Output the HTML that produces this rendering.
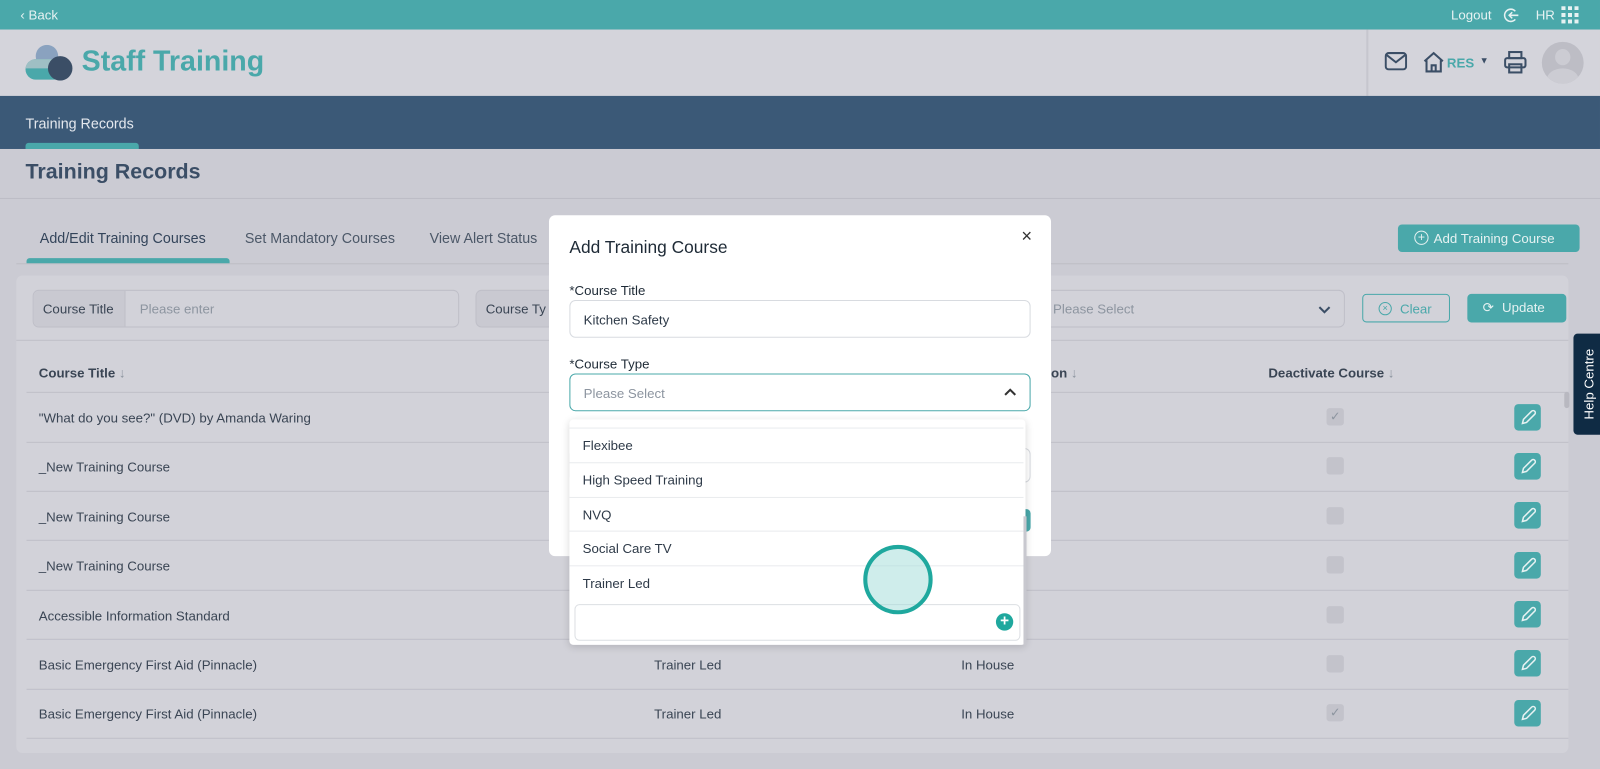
<!DOCTYPE html>
<html><head><meta charset="utf-8"><style>
*{box-sizing:border-box;margin:0;padding:0}
body{width:1600px;height:769px;overflow:hidden;font-family:"Liberation Sans",sans-serif;background:#cbcbd3;position:relative;color:#3a4554}
#w{position:absolute;left:0;top:0;width:1568px;height:754px;transform:scale(1.0204);transform-origin:0 0}
.abs{position:absolute}
.top{left:0;top:0;width:1568px;height:29px;background:#4aa8aa;color:#e6f2f2;font-size:13px}
.hdr{left:0;top:29px;width:1568px;height:65px;background:#d4d4db}
.nav{left:0;top:94px;width:1568px;height:52px;background:#3b5977}
.t{font-size:13px;white-space:nowrap}
.card{left:16px;top:270px;width:1521px;height:468px;background:#d2d2d9;border-radius:6px}
.row{left:26px;width:1511px;height:1px;background:#bfbfc8}
.chk{width:17px;height:17px;border-radius:3px;background:#c3c3cb}
.edit{width:26px;height:26px;border-radius:4px;background:#4aa8aa}
.modal{left:538px;top:211px;width:492px;height:334px;background:#fff;border-radius:6px}
.inp{border:1px solid #d8dbe0;border-radius:6px;background:#fff}
.dd{left:558px;top:411px;width:447px;height:221px;background:#fff;box-shadow:0 2px 8px rgba(0,0,0,.15);border-radius:4px}
.opt{position:absolute;left:0;width:445px;height:34px;border-top:1px solid #e9ebee;font-size:13px;padding:9px 13px;color:#2e3a48}
</style></head><body><div id="w">
<div class="abs top">
 <div class="abs t" style="left:20px;top:7px">‹ Back</div>
 <div class="abs t" style="left:1422px;top:7px">Logout</div>
 <svg class="abs" style="left:1473px;top:7px" width="16" height="16" viewBox="0 0 16 16" fill="none" stroke="#e6f2f2" stroke-width="1.5"><path d="M12 4A6 6 0 1 0 12 12"/><path d="M6 8h9M9 5L6 8l3 3"/></svg>
 <div class="abs t" style="left:1505px;top:7px">HR</div>
 <div class="abs" style="left:1530px;top:6px;width:17px;height:17px;background:repeating-linear-gradient(90deg,#e6f2f2 0 4px,transparent 4px 6.5px);-webkit-mask:repeating-linear-gradient(0deg,#000 0 4px,transparent 4px 6.5px)"></div>
</div>
<div class="abs hdr">
 <svg class="abs" style="left:24px;top:15px" width="48" height="35" viewBox="0 0 48 35"><ellipse cx="22" cy="11" rx="11" ry="11" fill="#8aa2bf"/><rect x="1" y="14" width="38" height="20" rx="10" fill="#4aa8aa"/><path d="M1 23a10 10 0 0 1 10-9h20v9z" fill="#9fbfc4"/><circle cx="35" cy="23" r="12" fill="#3b4e66"/></svg>
 <div class="abs" style="left:80px;top:15px;font-size:28px;font-weight:bold;color:#4aa8aa">Staff Training</div>
 <div class="abs" style="left:1339px;top:0;width:2px;height:65px;background:#c6c6ce"></div>
 <svg class="abs" style="left:1357px;top:22px" width="22" height="18" viewBox="0 0 22 18" fill="none" stroke="#3b4e66" stroke-width="2"><rect x="1" y="1" width="20" height="16" rx="3"/><path d="M2 3l9 7 9-7"/></svg>
 <svg class="abs" style="left:1394px;top:21px" width="22" height="22" viewBox="0 0 22 22" fill="none" stroke="#3b4e66" stroke-width="2"><path d="M2 10L11 2l9 8M4 9v11h14V9M9 20v-6h4v6"/></svg>
 <div class="abs" style="left:1418px;top:25px;font-size:13px;font-weight:bold;color:#4aa8aa">RES</div>
 <div class="abs" style="left:1450px;top:25px;font-size:9px;color:#3b4e66">▼</div>
 <svg class="abs" style="left:1474px;top:21px" width="22" height="22" viewBox="0 0 22 22" fill="none" stroke="#3b4e66" stroke-width="2"><rect x="5" y="1" width="12" height="6"/><rect x="1" y="7" width="20" height="9" rx="2"/><rect x="5" y="13" width="12" height="8"/></svg>
 <div class="abs" style="left:1511px;top:12px;width:41px;height:41px;border-radius:50%;background:#bdbdc5;overflow:hidden"><div class="abs" style="left:13px;top:7px;width:15px;height:16px;border-radius:50%;background:#ccccd3"></div><div class="abs" style="left:5px;top:26px;width:31px;height:22px;border-radius:50%;background:#ccccd3"></div></div>
</div>
<div class="abs nav">
 <div class="abs" style="left:25px;top:19px;font-size:14px;color:#e4e8ee">Training Records</div>
 <div class="abs" style="left:25px;top:46px;width:111px;height:6px;border-radius:3px 3px 0 0;background:#4aa8aa"></div>
</div>
<div class="abs" style="left:25px;top:157px;font-size:21px;font-weight:bold;color:#3b4e66">Training Records</div>
<div class="abs" style="left:0;top:194px;width:1568px;height:1px;background:#bdbdc5"></div>
<div class="abs t" style="left:39px;top:225px;font-size:14px;color:#33445a">Add/Edit Training Courses</div>
<div class="abs t" style="left:240px;top:225px;font-size:14px;color:#4c5868">Set Mandatory Courses</div>
<div class="abs t" style="left:421px;top:225px;font-size:14px;color:#4c5868">View Alert Status</div>
<div class="abs" style="left:16px;top:258px;width:1521px;height:1px;background:#bdbdc5"></div>
<div class="abs" style="left:26px;top:253px;width:199px;height:5px;border-radius:3px 3px 0 0;background:#4aa8aa"></div>
<div class="abs" style="left:1370px;top:220px;width:178px;height:27px;border-radius:4px;background:#4aa8aa;color:#e6f2f2;font-size:13px;padding:6px 0 0 35px">Add Training Course</div>
<div class="abs" style="left:1386px;top:226px;width:14px;height:14px;border-radius:50%;border:1.3px solid #e6f2f2;font-size:12px;line-height:11px;text-align:center;color:#e6f2f2">+</div>
<div class="abs card"></div>
<div class="abs" style="left:32px;top:284px;width:418px;height:37px;border:1px solid #bfbfc8;border-radius:6px;overflow:hidden"><div class="abs" style="left:0;top:0;width:90px;height:37px;background:#c9c9d1;border-right:1px solid #bfbfc8;font-size:13px;padding:10px 9px">Course Title</div><div class="abs t" style="left:104px;top:10px;color:#8d95a0">Please enter</div></div>
<div class="abs" style="left:466px;top:284px;width:80px;height:37px;border:1px solid #bfbfc8;border-radius:6px;background:#c9c9d1;font-size:13px;padding:10px 9px">Course Ty</div>
<div class="abs" style="left:1010px;top:284px;width:308px;height:37px;border:1px solid #bfbfc8;border-radius:0 6px 6px 0"><div class="abs t" style="left:21px;top:10px;color:#8d95a0">Please Select</div>
<svg class="abs" style="left:281px;top:13px" width="12" height="10" viewBox="0 0 12 10" fill="none" stroke="#3b4e66" stroke-width="2"><path d="M1 3l5 5 5-5"/></svg></div>
<div class="abs" style="left:1335px;top:288px;width:86px;height:28px;border:1px solid #4aa8aa;border-radius:4px;color:#4aa8aa;font-size:13px;padding:6px 0 0 36px">Clear</div>
<div class="abs" style="left:1351px;top:296px;width:13px;height:13px;border-radius:50%;border:1.2px solid #4aa8aa;font-size:9px;line-height:10px;text-align:center;color:#4aa8aa">×</div>
<div class="abs" style="left:1438px;top:288px;width:97px;height:28px;border-radius:4px;background:#4aa8aa;color:#e6f2f2;font-size:13px;padding:6px 0 0 34px">Update</div>
<div class="abs t" style="left:1453px;top:294px;color:#e6f2f2">⟳</div>
<div class="abs" style="left:16px;top:333px;width:1521px;height:1px;background:#c0c0c8"></div>
<div class="abs t" style="left:38px;top:358px;font-weight:bold">Course Title <span style="color:#8d95a0;font-weight:normal">↓</span></div>
<div class="abs t" style="left:1030px;top:358px;font-weight:bold">on <span style="color:#8d95a0;font-weight:normal">↓</span></div>
<div class="abs t" style="left:1243px;top:358px;font-weight:bold">Deactivate Course <span style="color:#8d95a0;font-weight:normal">↓</span></div>
<div class="abs row" style="top:384px"></div>
<div class="abs" style="left:1533px;top:384px;width:5px;height:16px;background:#b8b8c0;border-radius:3px"></div>
<div class="abs" style="left:1542px;top:327px;width:30px;height:99px;background:#0f2b44;border-radius:4px 0 0 4px"><div class="abs t" style="left:-25px;top:42px;transform:rotate(-90deg);color:#fff;font-size:13px;width:80px;text-align:center">Help Centre</div></div>

<div class="abs t" style="left:38px;top:402px">"What do you see?" (DVD) by Amanda Waring</div>
<div class="abs row" style="top:433px"></div>
<div class="abs t" style="left:38px;top:450px">_New Training Course</div>
<div class="abs row" style="top:481px"></div>
<div class="abs t" style="left:38px;top:499px">_New Training Course</div>
<div class="abs row" style="top:529px"></div>
<div class="abs t" style="left:38px;top:547px">_New Training Course</div>
<div class="abs row" style="top:578px"></div>
<div class="abs t" style="left:38px;top:596px">Accessible Information Standard</div>
<div class="abs row" style="top:626px"></div>
<div class="abs t" style="left:38px;top:644px">Basic Emergency First Aid (Pinnacle)</div>
<div class="abs t" style="left:641px;top:644px">Trainer Led</div>
<div class="abs t" style="left:942px;top:644px">In House</div>
<div class="abs row" style="top:675px"></div>
<div class="abs t" style="left:38px;top:692px">Basic Emergency First Aid (Pinnacle)</div>
<div class="abs t" style="left:641px;top:692px">Trainer Led</div>
<div class="abs t" style="left:942px;top:692px">In House</div>
<div class="abs row" style="top:723px"></div>

<div class="abs chk" style="left:1300px;top:400px;color:#8d95a0;font-size:12px;text-align:center;line-height:17px">✓</div>
<div class="abs chk" style="left:1300px;top:448px"></div>
<div class="abs chk" style="left:1300px;top:497px"></div>
<div class="abs chk" style="left:1300px;top:545px"></div>
<div class="abs chk" style="left:1300px;top:594px"></div>
<div class="abs chk" style="left:1300px;top:642px"></div>
<div class="abs chk" style="left:1300px;top:690px;color:#8d95a0;font-size:12px;text-align:center;line-height:17px">✓</div>

<div class="abs edit" style="left:1484px;top:396px"></div>
<div class="abs edit" style="left:1484px;top:444px"></div>
<div class="abs edit" style="left:1484px;top:492px"></div>
<div class="abs edit" style="left:1484px;top:541px"></div>
<div class="abs edit" style="left:1484px;top:589px"></div>
<div class="abs edit" style="left:1484px;top:637px"></div>
<div class="abs edit" style="left:1484px;top:686px"></div>
<svg class="abs" style="left:1484px;top:396px" width="26" height="316" viewBox="0 0 26 316" fill="none" stroke="#e6f2f2" stroke-width="1.5">
<path d="M8 19l1-4 8-8a2 2 0 0 1 3 3l-8 8z"/>
<path transform="translate(0,48)" d="M8 19l1-4 8-8a2 2 0 0 1 3 3l-8 8z"/>
<path transform="translate(0,96)" d="M8 19l1-4 8-8a2 2 0 0 1 3 3l-8 8z"/>
<path transform="translate(0,145)" d="M8 19l1-4 8-8a2 2 0 0 1 3 3l-8 8z"/>
<path transform="translate(0,193)" d="M8 19l1-4 8-8a2 2 0 0 1 3 3l-8 8z"/>
<path transform="translate(0,241)" d="M8 19l1-4 8-8a2 2 0 0 1 3 3l-8 8z"/>
<path transform="translate(0,290)" d="M8 19l1-4 8-8a2 2 0 0 1 3 3l-8 8z"/>
</svg>

<div class="abs modal">
 <div class="abs" style="left:20px;top:22px;font-size:17px;color:#1e2a36">Add Training Course</div>
 <div class="abs" style="left:463px;top:10px;font-size:18px;color:#333">×</div>
 <div class="abs t" style="left:20px;top:66px;color:#1e2a36">*Course Title</div>
 <div class="abs inp" style="left:20px;top:83px;width:452px;height:37px"><div class="abs t" style="left:13px;top:11px;color:#2e3a48">Kitchen Safety</div></div>
 <div class="abs t" style="left:20px;top:138px;color:#1e2a36">*Course Type</div>
 <div class="abs inp" style="left:20px;top:155px;width:452px;height:37px;border-color:#4aa8aa"><div class="abs t" style="left:13px;top:11px;color:#8d95a0">Please Select</div>
 <svg class="abs" style="left:425px;top:13px" width="12" height="10" viewBox="0 0 12 10" fill="none" stroke="#333" stroke-width="2"><path d="M1 7l5-5 5 5"/></svg></div>
 <div class="abs inp" style="left:20px;top:228px;width:452px;height:34px"></div>
 <div class="abs" style="left:440px;top:288px;width:32px;height:22px;background:#4aa8aa;border-radius:4px"></div>
</div>

<div class="abs dd">
 <div class="opt" style="top:8px">Flexibee</div>
 <div class="opt" style="top:42px">High Speed Training</div>
 <div class="opt" style="top:76px">NVQ</div>
 <div class="opt" style="top:109px">Social Care TV</div>
 <div class="opt" style="top:143px">Trainer Led</div>
 <div class="abs" style="left:445px;top:95px;width:3px;height:126px;background:#c8c8cf"></div>
 <div class="abs" style="left:5px;top:181px;width:437px;height:36px;border:1px solid #dcdfe3;border-radius:5px;background:#fff"></div>
 <div class="abs" style="left:418px;top:190px;width:17px;height:17px;border-radius:50%;background:#1fa89e;color:#fff;font-size:15px;line-height:16px;text-align:center;font-weight:bold">+</div>
</div>
<div class="abs" style="left:846px;top:534px;width:68px;height:68px;border-radius:50%;border:4px solid #1fa89e;background:rgba(160,220,215,.5)"></div>
</div></body></html>
